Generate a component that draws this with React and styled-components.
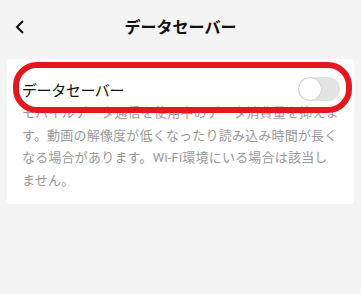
import styled, { createGlobalStyle } from "styled-components";

const Global = createGlobalStyle`
  html, body {
    margin: 0;
    padding: 0;
    background: #f4f4f4;
    font-family: "Noto Sans CJK JP", "Noto Sans", sans-serif;
  }
`;

const Page = styled.div`
  width: 361px;
  height: 294px;
  background: #f4f4f4;
  overflow: hidden;
`;

const Header = styled.div`
  height: 52px;
  padding: 0 10px;
  display: grid;
  grid-template-columns: 40px 1fr 40px;
  align-items: center;
`;

const Back = styled.button`
  width: 20px;
  height: 20px;
  padding: 0;
  margin-top: 2px;
  border: none;
  background: none;
  display: flex;
  align-items: center;
  justify-content: center;
`;

const Title = styled.h1`
  margin: 0;
  text-align: center;
  font-size: 16px;
  font-weight: 700;
  color: #111;
`;

const Card = styled.div`
  position: relative;
  margin: 7px 7px 0;
  background: #fff;
  border-radius: 4px;
  padding: 18px 14px 12px 15px;
`;

const Row = styled.div`
  height: 24px;
  display: flex;
  align-items: center;
  justify-content: space-between;
`;

const Label = styled.span`
  font-size: 15px;
  letter-spacing: -0.4px;
  color: #111;
`;

const Track = styled.div`
  width: 42px;
  height: 24px;
  box-sizing: border-box;
  padding: 1px;
  border-radius: 12px;
  display: flex;
  justify-content: ${(p) => (p.on ? "flex-end" : "flex-start")};
  background: ${(p) => (p.on ? "#fe2c55" : "#e3e3e3")};
`;

const Knob = styled.div`
  width: 22px;
  height: 22px;
  border-radius: 50%;
  background: #fff;
  box-shadow: 0 0 1px rgba(0, 0, 0, 0.35);
`;

const Desc = styled.p`
  margin: 1px 0 0;
  width: 320px;
  font-family: Roboto, "Noto Sans CJK JP", sans-serif;
  font-size: 13px;
  letter-spacing: 0.2px;
  line-height: 22.5px;
  color: #9a9a9a;
`;

const Highlight = styled.div`
  position: absolute;
  left: 6px;
  top: 3px;
  width: 339px;
  height: 51px;
  box-sizing: border-box;
  border: 6px solid #e4161f;
  border-radius: 24px;
  pointer-events: none;
`;

export default function App() {
  return (
    <Page>
      <Global />
      <Header>
        <Back>
          <svg width="12" height="14" viewBox="0 0 12 14">
            <path d="M9 1 L3 7 L9 13" fill="none" stroke="#111" strokeWidth="2" />
          </svg>
        </Back>
        <Title>データセーバー</Title>
        <span />
      </Header>
      <Card>
        <Row>
          <Label>データセーバー</Label>
          <Track>
            <Knob />
          </Track>
        </Row>
        <Desc>
          モバイルデータ通信を使用中のデータ消費量を抑えます。動画の解像度が低くなったり読み込み時間が長くなる場合があります。Wi-Fi環境にいる場合は該当し
          <br />
          ません。
        </Desc>
        <Highlight />
      </Card>
    </Page>
  );
}
